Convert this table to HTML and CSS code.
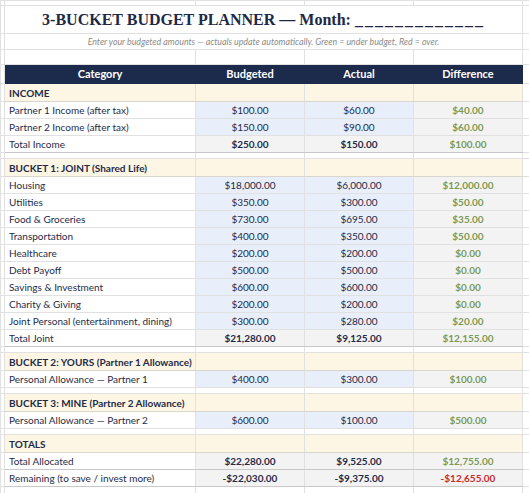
FILE: index.html
```html
<!DOCTYPE html>
<html>
<head>
  <link rel="stylesheet" href="styles.css">
</head>
<body>
  <table class="sheet">
    <colgroup>
      <col class="gutter">
      <col class="col-cat">
      <col class="col-num">
      <col class="col-num">
      <col class="col-num">
      <col>
    </colgroup>
    <tr class="top"><td></td><td></td><td></td><td></td><td></td><td></td></tr>
    <tr class="title-row"><td></td><td colspan="4" class="title">3-BUCKET BUDGET PLANNER — Month: <span class="blank-line">_____________</span></td><td></td></tr>
    <tr class="sub-row"><td></td><td colspan="4" class="subtitle">Enter your budgeted amounts — actuals update automatically. Green = under budget, Red = over.</td><td></td></tr>
    <tr class="blank"><td></td><td></td><td></td><td></td><td></td><td></td></tr>

    <tr class="head"><td></td><th>Category</th><th>Budgeted</th><th>Actual</th><th>Difference</th><td></td></tr>

    <!-- income -->
    <tr class="section"><td></td><td class="label">INCOME</td><td></td><td></td><td></td><td></td></tr>
    <tr class="row"><td></td><td>Partner 1 Income (after tax)</td><td class="input">$100.00</td><td class="input">$60.00</td><td class="diff">$40.00</td><td></td></tr>
    <tr class="row"><td></td><td>Partner 2 Income (after tax)</td><td class="input">$150.00</td><td class="input">$90.00</td><td class="diff">$60.00</td><td></td></tr>
    <tr class="row total"><td></td><td>Total Income</td><td class="sum">$250.00</td><td class="sum">$150.00</td><td class="diff">$100.00</td><td></td></tr>
    <tr class="gap"><td></td><td></td><td></td><td></td><td></td><td></td></tr>

    <!-- bucket 1 -->
    <tr class="section"><td></td><td class="label">BUCKET 1: JOINT (Shared Life)</td><td></td><td></td><td></td><td></td></tr>
    <tr class="row"><td></td><td>Housing</td><td class="input">$18,000.00</td><td class="input">$6,000.00</td><td class="diff">$12,000.00</td><td></td></tr>
    <tr class="row"><td></td><td>Utilities</td><td class="input">$350.00</td><td class="input">$300.00</td><td class="diff">$50.00</td><td></td></tr>
    <tr class="row"><td></td><td>Food &amp; Groceries</td><td class="input">$730.00</td><td class="input">$695.00</td><td class="diff">$35.00</td><td></td></tr>
    <tr class="row"><td></td><td>Transportation</td><td class="input">$400.00</td><td class="input">$350.00</td><td class="diff">$50.00</td><td></td></tr>
    <tr class="row"><td></td><td>Healthcare</td><td class="input">$200.00</td><td class="input">$200.00</td><td class="diff">$0.00</td><td></td></tr>
    <tr class="row"><td></td><td>Debt Payoff</td><td class="input">$500.00</td><td class="input">$500.00</td><td class="diff">$0.00</td><td></td></tr>
    <tr class="row"><td></td><td>Savings &amp; Investment</td><td class="input">$600.00</td><td class="input">$600.00</td><td class="diff">$0.00</td><td></td></tr>
    <tr class="row"><td></td><td>Charity &amp; Giving</td><td class="input">$200.00</td><td class="input">$200.00</td><td class="diff">$0.00</td><td></td></tr>
    <tr class="row"><td></td><td>Joint Personal (entertainment, dining)</td><td class="input">$300.00</td><td class="input">$280.00</td><td class="diff">$20.00</td><td></td></tr>
    <tr class="row total"><td></td><td>Total Joint</td><td class="sum">$21,280.00</td><td class="sum">$9,125.00</td><td class="diff">$12,155.00</td><td></td></tr>
    <tr class="gap"><td></td><td></td><td></td><td></td><td></td><td></td></tr>

    <!-- bucket 2 -->
    <tr class="section"><td></td><td class="label">BUCKET 2: YOURS (Partner 1 Allowance)</td><td></td><td></td><td></td><td></td></tr>
    <tr class="row"><td></td><td>Personal Allowance — Partner 1</td><td class="input">$400.00</td><td class="input">$300.00</td><td class="diff">$100.00</td><td></td></tr>
    <tr class="gap"><td></td><td></td><td></td><td></td><td></td><td></td></tr>

    <!-- bucket 3 -->
    <tr class="section"><td></td><td class="label">BUCKET 3: MINE (Partner 2 Allowance)</td><td></td><td></td><td></td><td></td></tr>
    <tr class="row"><td></td><td>Personal Allowance — Partner 2</td><td class="input">$600.00</td><td class="input">$100.00</td><td class="diff">$500.00</td><td></td></tr>
    <tr class="gap"><td></td><td></td><td></td><td></td><td></td><td></td></tr>

    <!-- totals -->
    <tr class="section"><td></td><td class="label">TOTALS</td><td></td><td></td><td></td><td></td></tr>
    <tr class="row total"><td></td><td>Total Allocated</td><td class="sum">$22,280.00</td><td class="sum">$9,525.00</td><td class="diff">$12,755.00</td><td></td></tr>
    <tr class="row total last"><td></td><td>Remaining (to save / invest more)</td><td class="sum">-$22,030.00</td><td class="sum">-$9,375.00</td><td class="diff over">-$12,655.00</td><td></td></tr>
    <tr class="blank"><td></td><td></td><td></td><td></td><td></td><td></td></tr>
  </table>
</body>
</html>
```

FILE: styles.css
```css
body {
  margin: 0;
  background: #fff;
  font-family: Lato, "Liberation Sans", sans-serif;
  color: #1f2b48;
  overflow: hidden;
}

.sheet {
  border-collapse: collapse;
  table-layout: fixed;
  width: 540px;
  font-size: 10px;
}

.gutter { width: 4px; }
.col-cat { width: 191px; }
.col-num { width: 109px; }

.sheet td,
.sheet th {
  border: 1px solid #e1e1e1;
  padding: 0 4px;
  white-space: nowrap;
  overflow: hidden;
  line-height: 12px;
}

.sheet tr > :first-child,
.sheet tr > :last-child {
  padding: 0;
}

/* row heights */
.top td { height: 4px; }
.title-row td { height: 27px; }
.sub-row td { height: 15px; }
.blank td { height: 14px; }
.head > * { height: 18px; }
.section td { height: 17px; }
.row td { height: 16px; }
.gap td { height: 5px; }

.sheet .title {
  text-align: center;
  font-family: "Liberation Serif", serif;
  font-weight: bold;
  font-size: 16px;
  line-height: 18px;
  color: #1c2947;
  vertical-align: middle;
}

.blank-line {
  letter-spacing: 2px;
}

.subtitle {
  text-align: center;
  font-style: italic;
  font-size: 8.8px;
  color: #8b8b8b;
}

.head th {
  background: #1c2a4b;
  border-color: #1c2a4b;
  color: #fff;
  font-size: 11px;
  font-weight: bold;
  text-align: center;
}

.section td:not(:first-child):not(:last-child) {
  background: #fdf6e5;
  border-bottom-color: #d9d6cf;
}

.section .label {
  font-weight: bold;
}

.row td:nth-child(3),
.row td:nth-child(4),
.row td:nth-child(5) {
  text-align: center;
}

.input {
  background: #e8effb;
}

.diff {
  background: #f3f3f3;
  color: #7b9a55;
  font-weight: bold;
}

.diff.over {
  color: #cc2b2b;
}

.total td:not(:first-child):not(:last-child) {
  border-top-color: #bdbdbd;
  border-bottom-color: #c8c8c8;
}

.sum {
  background: #f3f3f3;
  font-weight: bold;
}
```
